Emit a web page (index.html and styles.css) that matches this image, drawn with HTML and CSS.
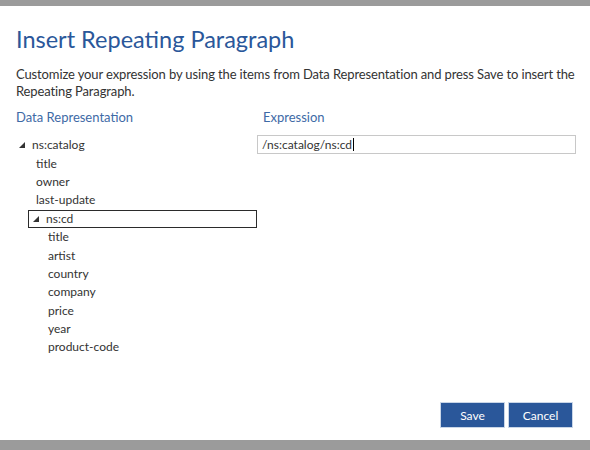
FILE: index.html
```html
<!DOCTYPE html>
<html>
<head>
<meta charset="utf-8">
<link rel="stylesheet" href="styles.css">
</head>
<body>
<div class="dialog">
  <div class="bar"></div>
  <div class="content">
    <h1 class="title">Insert Repeating Paragraph</h1>
    <p class="desc">Customize your expression by using the items from Data Representation and press Save to insert the Repeating Paragraph.</p>
    <div class="cols">
      <div class="left">
        <div class="heading">Data Representation</div>
        <ul class="tree">
          <li class="node lvl0"><span class="arrow"></span>ns:catalog</li>
          <li class="node lvl1">title</li>
          <li class="node lvl1">owner</li>
          <li class="node lvl1">last-update</li>
          <li class="node lvl1 selected"><span class="arrow"></span>ns:cd</li>
          <li class="node lvl2">title</li>
          <li class="node lvl2">artist</li>
          <li class="node lvl2">country</li>
          <li class="node lvl2">company</li>
          <li class="node lvl2">price</li>
          <li class="node lvl2">year</li>
          <li class="node lvl2">product-code</li>
        </ul>
      </div>
      <div class="right">
        <div class="heading exp">Expression</div>
        <div class="input">/ns:catalog/ns:cd<span class="caret"></span></div>
      </div>
    </div>
  </div>
  <div class="footer">
    <button class="btn">Save</button>
    <button class="btn">Cancel</button>
  </div>
  <div class="bar bottom"></div>
</div>
</body>
</html>
```
FILE: styles.css
```css
html, body {
  margin: 0;
  padding: 0;
  background: #fff;
}
.dialog {
  width: 590px;
  height: 450px;
  display: flex;
  flex-direction: column;
  font-family: Lato, "Open Sans", sans-serif;
  color: #444;
}
.bar {
  height: 6px;
  background: #9b9b9b;
  flex: none;
}
.bar.bottom {
  height: 10px;
}
.content {
  flex: 1;
  padding: 0 4px 0 16px;
}
.title {
  margin: 17px 0 0 0;
  font-size: 23.5px;
  font-weight: 400;
  line-height: 32px;
  color: #2a579a;
}
.desc {
  margin: 11px 0 0 0;
  font-size: 13px;
  line-height: 17px;
  color: #333;
  letter-spacing: -0.12px;
}
.cols {
  display: flex;
  margin-top: 9px;
}
.left {
  width: 241px;
}
.right {
  width: 319px;
}
.heading {
  font-size: 13px;
  line-height: 17px;
  color: #3e6aa6;
}
.heading.exp {
  padding-left: 6px;
}
.tree {
  list-style: none;
  margin: 10px 0 0 0;
  padding: 0;
  font-size: 12px;
  color: #333;
}
.node {
  height: 18.4px;
  line-height: 18px;
  box-sizing: border-box;
  display: flex;
  align-items: center;
}
.lvl0 { padding-left: 3px; }
.lvl1 { padding-left: 20px; }
.lvl2 { padding-left: 32px; }
.node.selected {
  margin-left: 12px;
  padding-left: 4px;
  border: 1px solid #2b2b2b;
}
.arrow {
  width: 0;
  height: 0;
  border-left: 6px solid transparent;
  border-bottom: 6px solid #333;
  margin-right: 7px;
}
.input {
  margin-top: 9px;
  height: 19px;
  box-sizing: border-box;
  border: 1px solid #c8c8c8;
  font-size: 12px;
  line-height: 17px;
  padding-left: 4px;
  color: #333;
  display: flex;
  align-items: center;
}
.caret {
  width: 1px;
  height: 13px;
  background: #000;
  margin-left: 1px;
}
.footer {
  display: flex;
  justify-content: flex-end;
  gap: 5px;
  padding: 0 18px 13px 0;
}
.btn {
  width: 63px;
  height: 24px;
  background: #2a579a;
  border: 1px solid #2a579a;
  outline: 1px solid #c9d6e8;
  color: #fff;
  font-family: Lato, "Open Sans", sans-serif;
  font-size: 12px;
  padding: 0;
}
```
